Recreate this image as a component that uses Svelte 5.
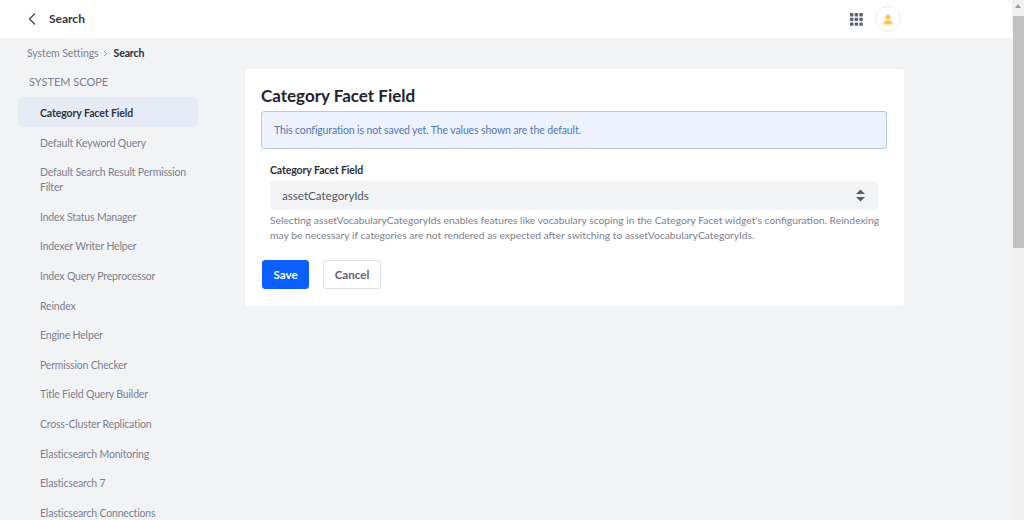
<script lang="ts">
  const items = [
    'Default Keyword Query',
    'Default Search Result Permission Filter',
    'Index Status Manager',
    'Indexer Writer Helper',
    'Index Query Preprocessor',
    'Reindex',
    'Engine Helper',
    'Permission Checker',
    'Title Field Query Builder',
    'Cross-Cluster Replication',
    'Elasticsearch Monitoring',
    'Elasticsearch 7',
    'Elasticsearch Connections',
  ];
</script>

<div class="page">
  <div class="content">
    <header class="topbar">
      <div class="back">
        <svg width="10" height="14" viewBox="0 0 10 14"><path d="M8 1.5 2.5 7 8 12.5" fill="none" stroke="#4b4f5c" stroke-width="1.4" /></svg>
        <span>Search</span>
      </div>
      <div class="actions">
        <svg class="apps" width="13" height="13" viewBox="0 0 13 13" fill="#5f6270">
          {#each [0, 4.7, 9.4] as y}
            {#each [0, 4.7, 9.4] as x}
              <rect {x} {y} width="3.4" height="3.4" rx="0.5" />
            {/each}
          {/each}
        </svg>
        <div class="avatar">
          <svg width="10" height="11" viewBox="0 0 10 11" fill="#fbc65a">
            <circle cx="5" cy="3" r="2.6" />
            <path d="M0.4 10.6C0.4 7.6 2.2 6 5 6s4.6 1.6 4.6 4.6z" />
          </svg>
        </div>
      </div>
    </header>

    <div class="columns">
      <aside class="sidebar">
        <nav class="crumbs">
          <span>System Settings</span>
          <svg width="5" height="7" viewBox="0 0 5 7"><path d="M1 1 3.8 3.5 1 6" fill="none" stroke="#8b8e99" stroke-width="0.9" /></svg>
          <strong>Search</strong>
        </nav>
        <div class="scope">SYSTEM SCOPE</div>
        <ul>
          <li class="active">Category Facet Field</li>
          {#each items as item}
            <li>{item}</li>
          {/each}
        </ul>
      </aside>

      <main class="card">
        <h1>Category Facet Field</h1>
        <div class="alert">This configuration is not saved yet. The values shown are the default.</div>
        <div class="field">
          <div class="label">Category Facet Field</div>
          <div class="select">
            <span>assetCategoryIds</span>
            <svg width="9" height="13" viewBox="0 0 9 13" fill="#5a5e6b">
              <path d="M4.5 0.5 9 5H0z" />
              <path d="M0 8h9l-4.5 4.5z" />
            </svg>
          </div>
          <p>Selecting assetVocabularyCategoryIds enables features like vocabulary scoping in the Category Facet widget's configuration. Reindexing may be necessary if categories are not rendered as expected after switching to assetVocabularyCategoryIds.</p>
        </div>
        <div class="buttons">
          <button class="save">Save</button>
          <button class="cancel">Cancel</button>
        </div>
      </main>
    </div>
  </div>

  <div class="scrollbar">
    <div class="arrow"></div>
    <div class="thumb"></div>
  </div>
</div>

<style>
  :global(body) {
    margin: 0;
    overflow: hidden;
  }

  .page {
    display: flex;
    width: 1024px;
    height: 520px;
    overflow: hidden;
    font-family: Lato, Roboto, sans-serif;
    background: #f1f3f5;
  }

  .content {
    width: 1012px;
    flex: none;
  }

  .topbar {
    display: flex;
    align-items: center;
    justify-content: space-between;
    height: 38px;
    background: #fff;
    padding: 0 111px 0 27px;
  }

  .back {
    display: flex;
    align-items: center;
    gap: 12px;
    font-size: 12px;
    font-weight: 700;
    color: #33363f;
  }

  .back span {
    padding-bottom: 1px;
  }

  .actions {
    display: flex;
    align-items: center;
    gap: 12px;
  }

  .apps {
    display: block;
  }

  .avatar {
    display: flex;
    align-items: center;
    justify-content: center;
    width: 24px;
    height: 24px;
    border: 1px solid #ececec;
    border-radius: 50%;
  }

  .columns {
    display: flex;
    align-items: flex-start;
  }

  .sidebar {
    width: 180px;
    flex: none;
    margin-left: 18px;
  }

  .crumbs {
    display: flex;
    align-items: center;
    gap: 5px;
    height: 16px;
    margin: 7px 0 0 9px;
    font-size: 10.5px;
    letter-spacing: -0.1px;
    color: #7d808c;
  }

  .crumbs strong {
    font-weight: 700;
    color: #2c2e36;
  }

  .scope {
    margin: 13px 0 0 11px;
    height: 16px;
    line-height: 16px;
    font-size: 11px;
    color: #7d808c;
  }

  ul {
    list-style: none;
    margin: 7px 0 0;
    padding: 0;
  }

  li {
    padding: 9px 8px 5.6px 22px;
    font-size: 10.5px;
    letter-spacing: -0.18px;
    line-height: 15px;
    color: #7d808c;
  }

  li.active {
    background: #e6ebf6;
    border-radius: 5px;
    color: #32353f;
    font-weight: 700;
    letter-spacing: -0.1px;
  }

  .card {
    box-sizing: border-box;
    width: 659px;
    height: 237px;
    margin: 31px 0 0 47px;
    padding: 17px 17px 0 16px;
    background: #fff;
    border-radius: 3px;
  }

  h1 {
    margin: 0;
    font-size: 17px;
    line-height: 20px;
    font-weight: 700;
    color: #22242c;
  }

  .alert {
    box-sizing: border-box;
    height: 38px;
    margin-top: 5px;
    padding: 0 12px;
    line-height: 36px;
    font-size: 10.5px;
    letter-spacing: -0.13px;
    color: #5577ae;
    background: #edf2fc;
    border: 1px solid #b6c8e2;
    border-radius: 3px;
  }

  .field {
    margin: 13px 9px 0;
  }

  .label {
    font-size: 10.5px;
    letter-spacing: -0.1px;
    line-height: 16px;
    font-weight: 700;
    color: #2c2e36;
  }

  .select {
    display: flex;
    align-items: center;
    justify-content: space-between;
    height: 29px;
    margin-top: 3px;
    padding: 0 13px 0 12px;
    font-size: 11.6px;
    color: #53565f;
    background: #f1f3f5;
    border-radius: 4px;
  }

  p {
    margin: 3px -4px 0 0;
    font-size: 10.3px;
    line-height: 15px;
    color: #7d808c;
  }

  .buttons {
    display: flex;
    gap: 14px;
    margin: 17px 0 0 1px;
  }

  button {
    box-sizing: border-box;
    height: 29px;
    padding: 0;
    font-family: inherit;
    font-size: 11.6px;
    font-weight: 700;
    border-radius: 3px;
  }

  .save {
    width: 47px;
    color: #fff;
    background: #0b5fff;
    border: 1px solid #0b5fff;
  }

  .cancel {
    width: 58px;
    color: #5f626e;
    background: #fff;
    border: 1px solid #dcdee3;
  }

  .scrollbar {
    width: 12px;
    flex: none;
    background: #f1f1f1;
  }

  .arrow {
    width: 0;
    height: 0;
    margin: 4px auto 8px;
    border-left: 3px solid transparent;
    border-right: 3px solid transparent;
    border-bottom: 4px solid #9a9a9a;
  }

  .thumb {
    height: 232px;
    margin-left: 1px;
    background: #c1c1c1;
  }
</style>
